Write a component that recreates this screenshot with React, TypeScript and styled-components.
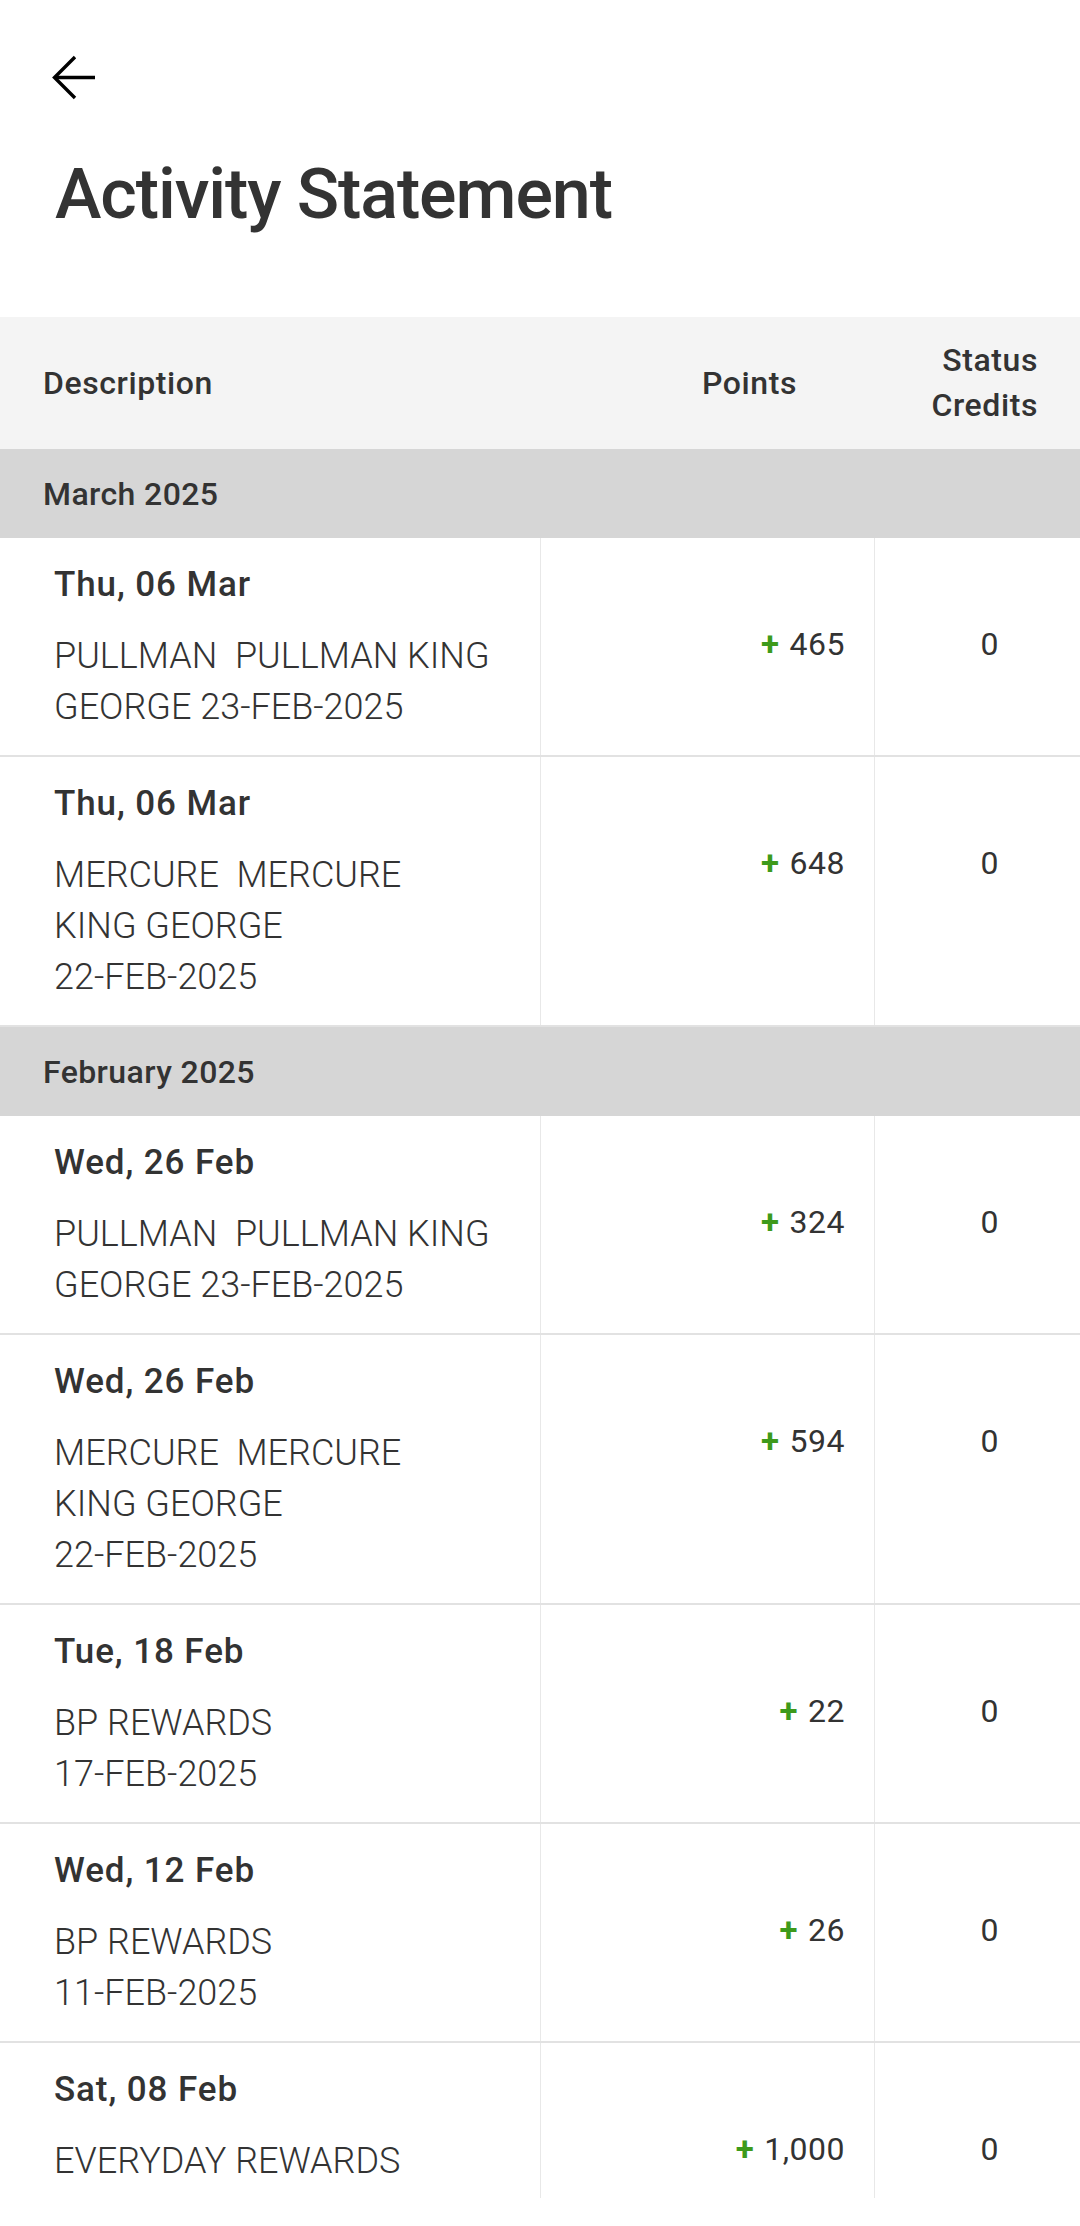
import React from 'react';
import styled, { createGlobalStyle } from 'styled-components';

const GlobalStyle = createGlobalStyle`
  html, body { margin: 0; padding: 0; background: #ffffff; }
  body {
    font-family: Roboto, "Noto Sans", "Liberation Sans", sans-serif;
    color: #333333;
    -webkit-font-smoothing: antialiased;
  }
  * { box-sizing: border-box; }
`;

const Page = styled.div`
  width: 1080px;
  height: 2226px;
  display: flex;
  flex-direction: column;
  background: #ffffff;
  padding-bottom: 28px;
  overflow: hidden;
`;

const TopBar = styled.header`
  display: flex;
  flex-direction: column;
  padding: 55px 0 0 52px;
`;

const BackButton = styled.button`
  width: 45px;
  height: 45px;
  padding: 0;
  border: none;
  background: transparent;
  display: flex;
  cursor: pointer;
`;

const Title = styled.h1`
  margin: 52px 0 81px 3px;
  font-size: 70px;
  line-height: 84px;
  font-weight: 500;
  color: #333333;
  letter-spacing: -1.1px;
`;

const Scroller = styled.div`
  flex: 1;
  overflow: hidden;
`;

const HeaderRow = styled.div`
  display: grid;
  grid-template-columns: 541px 334px 1fr;
  height: 132px;
  background: #f4f4f4;
  font-size: 32px;
  font-weight: 500;
  line-height: 45px;
  letter-spacing: 0.6px;
  color: #333333;
`;

const HeaderCell = styled.div<{ $align: 'left' | 'right'; $pad: string }>`
  display: flex;
  align-items: center;
  justify-content: ${(p) => (p.$align === 'left' ? 'flex-start' : 'flex-end')};
  text-align: ${(p) => p.$align};
  padding: ${(p) => p.$pad};
`;

const MonthBand = styled.div`
  height: 89px;
  display: flex;
  align-items: center;
  padding-left: 43px;
  background: #d6d6d6;
  font-size: 32px;
  font-weight: 500;
  letter-spacing: 0.4px;
  color: #333333;
`;

const Row = styled.div`
  display: grid;
  grid-template-columns: 541px 334px 1fr;
  border-bottom: 2px solid #e2e2e2;
`;

const DescCell = styled.div`
  padding: 23px 20px 22px 54px;
  border-right: 1px solid #e8e8e8;
`;

const DateLine = styled.div`
  font-size: 35px;
  line-height: 48px;
  font-weight: 500;
  letter-spacing: 0.9px;
  color: #333333;
`;

const DescText = styled.div`
  margin-top: 22px;
  font-size: 36px;
  line-height: 51px;
  font-weight: 300;
  color: #333333;
  white-space: pre;
`;

const PointsCell = styled.div`
  padding: 86px 29px 0 0;
  text-align: right;
  font-size: 32px;
  line-height: 40px;
  font-weight: 400;
  letter-spacing: 0.5px;
  color: #333333;
  border-right: 1px solid #e8e8e8;
`;

const Plus = styled.span`
  color: #3d9a1b;
  font-weight: 700;
  font-size: 33px;
  margin-right: 10px;
`;

const StatusCell = styled.div`
  padding: 86px 0 0 24px;
  text-align: center;
  font-size: 32px;
  line-height: 40px;
  font-weight: 400;
  color: #333333;
`;

type Entry = { date: string; lines: string[]; points: string; status: string };
type Group = { month: string; entries: Entry[] };

const groups: Group[] = [
  {
    month: 'March 2025',
    entries: [
      { date: 'Thu, 06 Mar', lines: ['PULLMAN  PULLMAN KING', 'GEORGE 23-FEB-2025'], points: '465', status: '0' },
      { date: 'Thu, 06 Mar', lines: ['MERCURE  MERCURE', 'KING GEORGE', '22-FEB-2025'], points: '648', status: '0' },
    ],
  },
  {
    month: 'February 2025',
    entries: [
      { date: 'Wed, 26 Feb', lines: ['PULLMAN  PULLMAN KING', 'GEORGE 23-FEB-2025'], points: '324', status: '0' },
      { date: 'Wed, 26 Feb', lines: ['MERCURE  MERCURE', 'KING GEORGE', '22-FEB-2025'], points: '594', status: '0' },
      { date: 'Tue, 18 Feb', lines: ['BP REWARDS', '17-FEB-2025'], points: '22', status: '0' },
      { date: 'Wed, 12 Feb', lines: ['BP REWARDS', '11-FEB-2025'], points: '26', status: '0' },
      { date: 'Sat, 08 Feb', lines: ['EVERYDAY REWARDS'], points: '1,000', status: '0' },
    ],
  },
];

const BackArrow = () => (
  <svg width="45" height="45" viewBox="0 0 45 45" fill="none">
    <path d="M23 2 L2.5 22.5 L23 43" stroke="#000" strokeWidth="3.4" strokeLinejoin="miter" />
    <path d="M3 22.5 H43" stroke="#000" strokeWidth="3.4" />
  </svg>
);

export default function App() {
  return (
    <>
      <GlobalStyle />
      <Page>
        <TopBar>
          <BackButton aria-label="Back">
            <BackArrow />
          </BackButton>
          <Title>Activity Statement</Title>
        </TopBar>
        <Scroller>
          <HeaderRow>
            <HeaderCell $align="left" $pad="0 0 0 43px">Description</HeaderCell>
            <HeaderCell $align="right" $pad="0 78px 0 0">Points</HeaderCell>
            <HeaderCell $align="right" $pad="0 42px 0 0">
              Status
              <br />
              Credits
            </HeaderCell>
          </HeaderRow>
          {groups.map((g) => (
            <section key={g.month}>
              <MonthBand>{g.month}</MonthBand>
              {g.entries.map((e, i) => (
                <Row key={i}>
                  <DescCell>
                    <DateLine>{e.date}</DateLine>
                    <DescText>{e.lines.join('\n')}</DescText>
                  </DescCell>
                  <PointsCell>
                    <Plus>+</Plus>
                    {e.points}
                  </PointsCell>
                  <StatusCell>{e.status}</StatusCell>
                </Row>
              ))}
            </section>
          ))}
        </Scroller>
      </Page>
    </>
  );
}
